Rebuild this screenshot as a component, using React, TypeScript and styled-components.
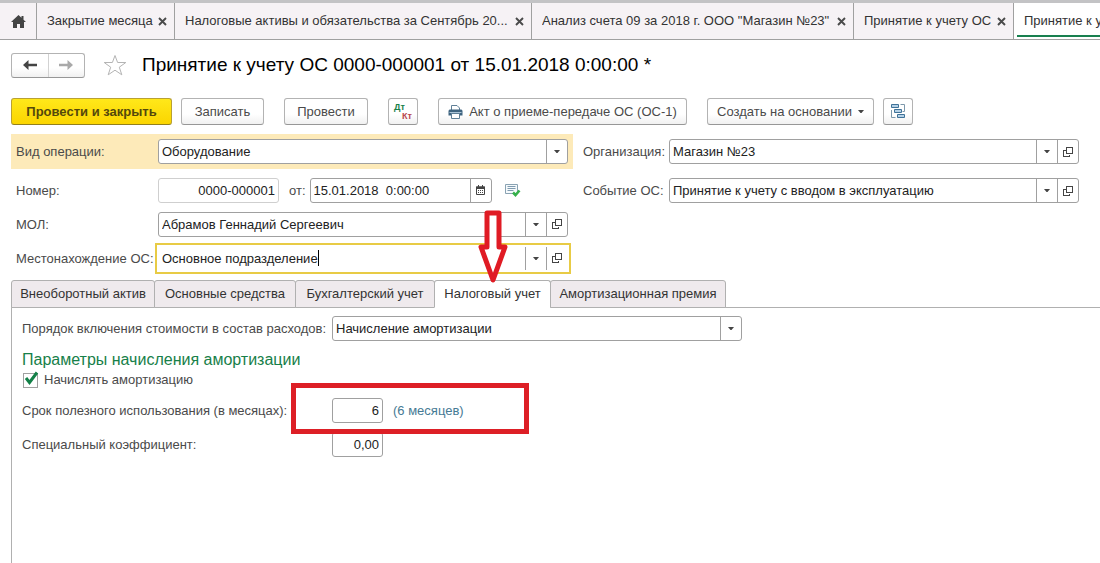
import React from "react";
import styled, { createGlobalStyle, css } from "styled-components";

const GlobalStyle = createGlobalStyle`
  *, *::before, *::after { box-sizing: border-box; }
  html, body, #root { height: 100%; }
  body {
    margin: 0;
    overflow: hidden;
    background: #fff;
    color: #4a4a4a;
    font: 13px/16px "Liberation Sans", Arial, sans-serif;
  }
  button, input, select { font: inherit; color: inherit; margin: 0; }
  button { padding: 0; cursor: pointer; }
`;

const line = "#a0a0a0";

const Page = styled.div`
  display: flex;
  flex-direction: column;
  min-height: 100%;
  border-top: 3px solid #c3c3c5;
`;

/* ---------- window tabs ---------- */

const WindowTabs = styled.nav`
  display: flex;
  height: 37px;
  overflow: hidden;
  background: #f6f2f5;
  border-bottom: 1px solid ${line};
`;

const HomeButton = styled.button`
  flex: 0 0 37px;
  display: grid;
  place-items: center;
  background: none;
  border: 0;
  border-right: 1px solid ${line};
`;

const WindowTab = styled.div<{ $width: number; $active?: boolean }>`
  flex: 0 0 ${(p) => p.$width}px;
  display: flex;
  align-items: center;
  gap: 4px;
  padding: 0 7px 0 10px;
  border-right: 1px solid ${line};
  color: #333;
  ${(p) =>
    p.$active &&
    css`
      background: linear-gradient(#18804f, #18804f) 3px 32px / 100% 2px no-repeat #fff;
    `}
`;

const WindowTabTitle = styled.button`
  flex: 1;
  min-width: 0;
  overflow: hidden;
  white-space: nowrap;
  text-align: left;
  background: none;
  border: 0;
`;

const CloseButton = styled.button`
  flex: none;
  display: grid;
  background: none;
  border: 0;
`;

/* ---------- header and toolbar ---------- */

const Header = styled.header`
  display: flex;
  align-items: center;
  height: 50px;
  padding-left: 11px;
`;

const buttonFace = css`
  background: linear-gradient(#fff 60%, #f1f1f1);
  border: 1px solid #b3b3b3;
  border-bottom-color: #979797;
  border-radius: 3px;
`;

const NavGroup = styled.div`
  ${buttonFace}
  display: flex;
  width: 74px;
  height: 25px;
`;

const NavButton = styled.button`
  flex: 1;
  display: grid;
  place-items: center;
  background: none;
  border: 0;
  & + & { border-left: 1px solid #d2d2d2; }
`;

const StarButton = styled.button`
  display: grid;
  margin: 0 15px 0 18px;
  background: none;
  border: 0;
`;

const Title = styled.h1`
  margin: 0;
  font-size: 19px;
  line-height: 24px;
  font-weight: 400;
  color: #000;
  white-space: nowrap;
`;

const Toolbar = styled.div`
  display: flex;
  gap: 20px;
  padding: 8px 11px;
`;

const ToolGroup = styled.div`
  display: flex;
  gap: 9px;
`;

const ToolButton = styled.button<{ $width: number; $primary?: boolean }>`
  ${buttonFace}
  display: flex;
  align-items: center;
  justify-content: center;
  gap: 6px;
  width: ${(p) => p.$width}px;
  height: 27px;
  white-space: nowrap;
  ${(p) =>
    p.$primary &&
    css`
      background: linear-gradient(#ffe81a, #fbd500);
      border-color: #b9a132;
      border-bottom-color: #93801c;
      color: #54480c;
      font-weight: 700;
    `}
`;

/* ---------- fields ---------- */

const Form = styled.div`
  display: grid;
  grid-template-columns: 562px minmax(0, 1fr);
  column-gap: 10px;
  align-items: start;
  padding: 1px 21px 0 11px;
`;

const Column = styled.div`
  display: flex;
  flex-direction: column;
`;

const Row = styled.div<{ $highlight?: boolean }>`
  display: flex;
  align-items: center;
  height: 34px;
  padding: 0 5px;
  ${(p) =>
    p.$highlight &&
    css`
      height: 35px;
      margin-bottom: 4px;
      background: #fdeab9;
    `}
`;

const SideRow = styled.div`
  display: flex;
  align-items: center;
  height: 35px;
  margin-bottom: 4px;
`;

const Label = styled.label<{ $width?: number }>`
  flex: none;
  width: ${(p) => (p.$width ? `${p.$width}px` : "auto")};
  padding-top: 1px;
  white-space: nowrap;
`;

const Field = styled.div<{ $width?: number; $focused?: boolean; $muted?: boolean }>`
  flex: ${(p) => (p.$width ? `0 0 ${p.$width}px` : "1")};
  display: flex;
  position: relative;
  min-width: 0;
  height: 25px;
  background: #fff;
  border: 1px solid ${(p) => (p.$muted ? "#cfcfcf" : line)};
  border-radius: 3px;
  color: #222;
  ${(p) =>
    p.$focused &&
    css`
      border-color: #fff;
      outline: 2px solid #e8cb45;
      outline-offset: 1px;
      border-radius: 0;
    `}
`;

const bare = css`
  background: none;
  border: 0;
  outline: 0;
  padding: 1px 3px 0;
`;

const TextInput = styled.input<{ $right?: boolean }>`
  ${bare}
  flex: 1;
  min-width: 0;
  text-align: ${(p) => (p.$right ? "right" : "left")};
`;

const FittedInput = styled.input`
  ${bare}
  field-sizing: content;
  padding-right: 0;
  caret-color: transparent;
`;

const TextCursor = styled.span`
  width: 1px;
  height: 16px;
  margin: 3px auto 0 0;
  background: #000;
`;

const Select = styled.select`
  ${bare}
  appearance: none;
  flex: 1;
  min-width: 0;
  margin-right: -21px;
`;

const cell = css`
  flex: 0 0 21px;
  display: grid;
  place-items: center;
  border: 0;
  border-left: 1px solid ${line};
  background: none;
`;

const ArrowCell = styled.span`
  ${cell}
  pointer-events: none;
`;

const CellButton = styled.button`
  ${cell}
`;

const FromLabel = styled(Label)`
  margin: 0 4px 0 10px;
`;

const StatusButton = styled.button`
  display: grid;
  margin-left: 13px;
  background: none;
  border: 0;
`;

/* ---------- page tabs ---------- */

const PageTabs = styled.div`
  display: flex;
  margin: 5px 0 0 11px;
  height: 28px;
  border-bottom: 1px solid #b0b0b0;
`;

const PageTab = styled.button<{ $width: number; $active?: boolean }>`
  position: relative;
  width: ${(p) => p.$width}px;
  height: 28px;
  margin-right: -1px;
  background: ${(p) => (p.$active ? "#fff" : "#efeaed")};
  border: 1px solid #b0b0b0;
  border-bottom-color: ${(p) => (p.$active ? "#fff" : "#b0b0b0")};
  border-radius: 3px 3px 0 0;
  color: #333;
  white-space: nowrap;
`;

const PointerArrow = styled.svg`
  position: absolute;
  left: 50%;
  bottom: 22px;
  transform: translateX(-50%);
  pointer-events: none;
`;

const Panel = styled.section`
  flex: 1;
  margin-left: 11px;
  padding: 3px 10px;
  border-left: 1px solid #b0b0b0;
`;

const PanelRow = styled.div`
  position: relative;
  display: flex;
  align-items: center;
  height: 34px;
`;

const SectionTitle = styled.h2`
  margin: 5px 0 2px;
  font-size: 16px;
  line-height: 20px;
  font-weight: 400;
  color: #178049;
`;

const CheckLine = styled.label`
  display: flex;
  align-items: center;
  gap: 6px;
  height: 16px;
  margin-bottom: 5px;
`;

const CheckBox = styled.input`
  appearance: none;
  width: 15px;
  height: 15px;
  margin: 0 0 0 1px;
  border: 1px solid ${line};
  background: #fff;
`;

const CheckWrap = styled.span`
  position: relative;
  display: grid;
`;

const CheckMark = styled.svg`
  position: absolute;
  left: 2px;
  top: -2px;
  pointer-events: none;
`;

const Hint = styled.span`
  margin-left: 10px;
  padding-top: 1px;
  color: #467a94;
`;

const RedFrame = styled.div`
  position: absolute;
  z-index: 1;
  left: 269px;
  top: -10px;
  width: 238px;
  height: 51px;
  border: 5px solid #dd1f26;
  pointer-events: none;
`;

/* ---------- icons ---------- */

const Cross = () => (
  <svg width="9" height="9" viewBox="0 0 9 9" stroke="#4a4a4a" strokeWidth="1.9">
    <path d="M1 1l7 7M8 1L1 8" />
  </svg>
);

const Caret = () => (
  <svg width="6" height="3" viewBox="0 0 6 3" fill="#444">
    <path d="M0 0h6L3.500 3h-1z" />
  </svg>
);

const OpenIcon = () => (
  <svg width="10" height="10" viewBox="0 0 10 10" fill="none" stroke="#444" shapeRendering="crispEdges">
    <path d="M3.500 .5h6v6h-6zM2.500 3.500H.5v6h6V7.500" />
  </svg>
);

const HomeIcon = () => (
  <svg width="15" height="13" viewBox="0 0 15 13" fill="#444">
    <path d="M7.500 0L0 7h2v6h4V9h3v4h4V7h2l-2.500-2.300V1h-2v1.800z" />
  </svg>
);

const NavArrow = ({ color, flip }: { color: string; flip?: boolean }) => (
  <svg width="14" height="10" viewBox="0 0 14 10" fill={color}>
    <path d={flip ? "M14 5L8.500 0V3.800H0v2.400h8.500V10z" : "M0 5L5.500 0V3.800H14v2.400H5.500V10z"} />
  </svg>
);

const StarIcon = () => (
  <svg width="24" height="22" viewBox="0 0 24 22" fill="#fff" stroke="#b4b4b4">
    <path d="M12 1.500l2.600 7h8.200l-6.500 4.700 2.500 7.600L12 16.200l-6.800 4.600 2.500-7.600L1.200 8.500h8.200z" />
  </svg>
);

const PrinterIcon = () => (
  <svg width="15" height="14" viewBox="0 0 15 14">
    <path d="M3.500 5V.5h5.500L11.500 3v2" fill="#fff" stroke="#5f7f96" />
    <path d="M1.500 4.500h12l1 1.200V10.500H.5V5.700z" fill="#3f6480" />
    <path d="M1.500 7.500h12" stroke="#a9c3d6" />
    <path d="M3.500 8.500h8v5h-8z" fill="#fff" stroke="#5f7f96" />
  </svg>
);

const StructureIcon = () => (
  <svg width="15" height="15" viewBox="0 0 15 15" fill="#b5d1e6" stroke="#3f7299">
    <path d="M.5 .5h7v3h-7zM3.500 5.500h7v3h-7zM6.500 10.500h7v3h-7z" />
    <path d="M9.500 .5h4v7h-2M.5 6v7.500h4" fill="none" stroke="#7d98ab" />
  </svg>
);

const CalendarIcon = () => (
  <svg width="9" height="10" viewBox="0 0 9 10">
    <path d="M.5 2h8v7.500h-8z" fill="#fff" stroke="#444" />
    <path d="M0 1.500h9v2.500H0zM2 0h1v2H2zM6 0h1v2H6z" fill="#444" />
    <path d="M2 5.500h5M2 7.500h5" stroke="#444" strokeDasharray="1 1" />
  </svg>
);

const PostedIcon = () => (
  <svg width="16" height="13" viewBox="0 0 16 13" fill="none">
    <path d="M.5 .5h12v9H.5z" fill="#f6fafc" stroke="#8aa3b3" />
    <path d="M2.500 2.500h8M2.500 4.500h8M2.500 6.500h6" stroke="#7f9bb0" />
    <path d="M8 8.500l2.500 2.500L14.500 6.500" stroke="#35b04a" strokeWidth="2.600" />
  </svg>
);

const DtKt = styled.span`
  display: flex;
  flex-direction: column;
  width: 18px;
  font-size: 9px;
  line-height: 9px;
  font-weight: 700;
  text-align: left;
  color: #178049;
`;

const Kt = styled.span`
  align-self: flex-end;
  color: #b9484e;
`;

/* ---------- composition ---------- */

type PickerProps = { id: string; value: string; width?: number; open?: boolean };

const Picker = ({ id, value, width, open }: PickerProps) => (
  <Field $width={width}>
    <Select id={id} defaultValue={value}>
      <option>{value}</option>
    </Select>
    <ArrowCell>
      <Caret />
    </ArrowCell>
    {open && (
      <CellButton type="button" aria-label="Открыть">
        <OpenIcon />
      </CellButton>
    )}
  </Field>
);

const windowTabs = [
  { title: "Закрытие месяца", width: 138 },
  { title: "Налоговые активы и обязательства за Сентябрь 20...", width: 357 },
  { title: 'Анализ счета 09 за 2018 г. ООО "Магазин №23"', width: 322 },
  { title: "Принятие к учету ОС", width: 160 },
  { title: "Принятие к учету ОС 0000-000001", width: 280, active: true },
];

const pageTabs = [
  { title: "Внеоборотный актив", width: 144 },
  { title: "Основные средства", width: 142 },
  { title: "Бухгалтерский учет", width: 140 },
  { title: "Налоговый учет", width: 117, active: true },
  { title: "Амортизационная премия", width: 176 },
];

export default function App() {
  return (
    <>
      <GlobalStyle />
      <Page>
        <WindowTabs>
          <HomeButton type="button" aria-label="Начальная страница">
            <HomeIcon />
          </HomeButton>
          {windowTabs.map((t) => (
            <WindowTab key={t.title} $width={t.width} $active={t.active}>
              <WindowTabTitle type="button">{t.title}</WindowTabTitle>
              <CloseButton type="button" aria-label="Закрыть">
                <Cross />
              </CloseButton>
            </WindowTab>
          ))}
        </WindowTabs>

        <Header>
          <NavGroup>
            <NavButton type="button" aria-label="Назад">
              <NavArrow color="#444" />
            </NavButton>
            <NavButton type="button" aria-label="Вперед">
              <NavArrow color="#a9a9a9" flip />
            </NavButton>
          </NavGroup>
          <StarButton type="button" aria-label="В избранное">
            <StarIcon />
          </StarButton>
          <Title>Принятие к учету ОС 0000-000001 от 15.01.2018 0:00:00 *</Title>
        </Header>

        <Toolbar>
          <ToolGroup>
            <ToolButton type="button" $width={161} $primary>
              Провести и закрыть
            </ToolButton>
            <ToolButton type="button" $width={83}>
              Записать
            </ToolButton>
          </ToolGroup>
          <ToolButton type="button" $width={84}>
            Провести
          </ToolButton>
          <ToolButton type="button" $width={30}>
            <DtKt>
              Дт<Kt>Кт</Kt>
            </DtKt>
          </ToolButton>
          <ToolButton type="button" $width={249}>
            <PrinterIcon />
            Акт о приеме-передаче ОС (ОС-1)
          </ToolButton>
          <ToolGroup>
            <ToolButton type="button" $width={167}>
              Создать на основании
              <Caret />
            </ToolButton>
            <ToolButton type="button" $width={30} aria-label="Структура подчиненности">
              <StructureIcon />
            </ToolButton>
          </ToolGroup>
        </Toolbar>

        <Form>
          <Column>
            <Row $highlight>
              <Label $width={142} htmlFor="operation">
                Вид операции:
              </Label>
              <Picker id="operation" value="Оборудование" />
            </Row>
            <Row>
              <Label $width={142} htmlFor="number">
                Номер:
              </Label>
              <Field $width={121} $muted>
                <TextInput id="number" $right defaultValue="0000-000001" />
              </Field>
              <FromLabel htmlFor="date">от:</FromLabel>
              <Field $width={182}>
                <TextInput id="date" defaultValue="15.01.2018  0:00:00" />
                <CellButton type="button" aria-label="Календарь">
                  <CalendarIcon />
                </CellButton>
              </Field>
              <StatusButton type="button" aria-label="Проведен">
                <PostedIcon />
              </StatusButton>
            </Row>
            <Row>
              <Label $width={142} htmlFor="person">
                МОЛ:
              </Label>
              <Picker id="person" value="Абрамов Геннадий Сергеевич" open />
            </Row>
            <Row>
              <Label $width={142} htmlFor="location">
                Местонахождение ОС:
              </Label>
              <Field $focused>
                <FittedInput id="location" defaultValue="Основное подразделение" />
                <TextCursor />
                <CellButton type="button" aria-label="Выбрать">
                  <Caret />
                </CellButton>
                <CellButton type="button" aria-label="Открыть">
                  <OpenIcon />
                </CellButton>
              </Field>
            </Row>
          </Column>
          <Column>
            <SideRow>
              <Label $width={86} htmlFor="organization">
                Организация:
              </Label>
              <Picker id="organization" value="Магазин №23" open />
            </SideRow>
            <SideRow>
              <Label $width={86} htmlFor="event">
                Событие ОС:
              </Label>
              <Picker id="event" value="Принятие к учету с вводом в эксплуатацию" open />
            </SideRow>
          </Column>
        </Form>

        <PageTabs role="tablist">
          {pageTabs.map((t) => (
            <PageTab
              key={t.title}
              type="button"
              role="tab"
              aria-selected={!!t.active}
              $width={t.width}
              $active={t.active}
            >
              {t.title}
              {t.active && (
                <PointerArrow width="32" height="76" viewBox="0 0 32 76">
                  <path
                    d="M10 4H22V38H28L16 71L4 38H10Z"
                    fill="#fff"
                    stroke="#e01b24"
                    strokeWidth="5"
                    strokeLinejoin="round"
                  />
                </PointerArrow>
              )}
            </PageTab>
          ))}
        </PageTabs>

        <Panel role="tabpanel">
          <PanelRow>
            <Label $width={310} htmlFor="order">
              Порядок включения стоимости в состав расходов:
            </Label>
            <Picker id="order" value="Начисление амортизации" width={410} />
          </PanelRow>
          <SectionTitle>Параметры начисления амортизации</SectionTitle>
          <CheckLine>
            <CheckWrap>
              <CheckBox type="checkbox" defaultChecked />
              <CheckMark width="15" height="14" viewBox="0 0 15 14" fill="none">
                <path d="M2 7l3.500 4.500L13 1.500" stroke="#138048" strokeWidth="3" />
              </CheckMark>
            </CheckWrap>
            Начислять амортизацию
          </CheckLine>
          <PanelRow>
            <Label $width={310} htmlFor="term">
              Срок полезного использования (в месяцах):
            </Label>
            <Field $width={51}>
              <TextInput id="term" $right defaultValue="6" />
            </Field>
            <Hint>(6 месяцев)</Hint>
            <RedFrame />
          </PanelRow>
          <PanelRow>
            <Label $width={310} htmlFor="factor">
              Специальный коэффициент:
            </Label>
            <Field $width={51}>
              <TextInput id="factor" $right defaultValue="0,00" />
            </Field>
          </PanelRow>
        </Panel>
      </Page>
    </>
  );
}
